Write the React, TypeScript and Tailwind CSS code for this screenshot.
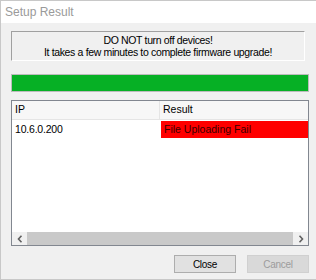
import React from 'react';

interface ResultRow {
  ip: string;
  result: string;
  failed: boolean;
}

const rows: ResultRow[] = [{ ip: '10.6.0.200', result: 'File Uploading Fail', failed: true }];

const Chevron = ({ dir }: { dir: 'left' | 'right' }) => (
  <svg width="6" height="8" viewBox="0 0 6 8" className="text-[#606060]">
    <path
      d={dir === 'left' ? 'M4.5 0.8 L1.5 4 L4.5 7.2' : 'M1.5 0.8 L4.5 4 L1.5 7.2'}
      fill="none"
      stroke="currentColor"
      strokeWidth="1.6"
    />
  </svg>
);

const App: React.FC = () => {
  return (
    <div
      className="w-[316px] h-[280px] flex flex-col bg-[#f0f0f0] border-t border-l border-b border-[#c8c8c8] text-[10px] text-black overflow-hidden"
      style={{ fontFamily: '"Liberation Sans", Arial, sans-serif' }}
    >
      {/* title bar */}
      <div className="h-[22px] shrink-0 bg-white flex items-center pl-[4px] text-[12px] text-[#9a9a9a]">
        Setup Result
      </div>

      <div className="flex-1 flex flex-col pl-[10px] pr-[7px] pt-[8px]">
        {/* warning message */}
        <div className="h-[30px] w-[294px] border-t border-l border-[#a0a0a0] border-b border-r border-b-white border-r-white flex flex-col items-center justify-center leading-[12px] tracking-[-0.35px] text-[10.5px]">
          <span>DO NOT turn off devices!</span>
          <span>It takes a few minutes to complete firmware upgrade!</span>
        </div>

        {/* progress bar */}
        <div className="mt-[13px] h-[18px] border border-[#bcbcbc] bg-[#e6e6e6]">
          <div className="h-full w-full bg-[#06b025]" />
        </div>

        {/* list view */}
        <div className="mt-[8px] h-[146px] border border-[#828790] bg-white flex flex-col text-[10.5px]">
          <div className="h-[19px] flex border-b border-[#e5e5e5] bg-[#f7f7f7]">
            <div className="w-[148px] pl-[3px] flex items-center border-r border-[#e5e5e5]">IP</div>
            <div className="flex-1 pl-[3px] flex items-center">Result</div>
          </div>
          <div className="flex-1">
            {rows.map(row => (
              <div key={row.ip} className="h-[17px] flex mt-[1px]">
                <div className="w-[149px] pl-[3px] flex items-center tracking-[-0.2px]">{row.ip}</div>
                <div
                  className={
                    row.failed
                      ? 'flex-1 pl-[3px] flex items-center bg-[#ff0000] text-[#3a0000]'
                      : 'flex-1 pl-[3px] flex items-center'
                  }
                >
                  {row.result}
                </div>
              </div>
            ))}
          </div>
          {/* horizontal scrollbar */}
          <div className="h-[13px] flex bg-[#c9c9c9]">
            <div className="w-[15px] bg-[#f0f0f0] flex items-center justify-center">
              <Chevron dir="left" />
            </div>
            <div className="flex-1" />
            <div className="w-[15px] bg-[#f0f0f0] flex items-center justify-center">
              <Chevron dir="right" />
            </div>
          </div>
        </div>

        {/* buttons */}
        <div className="mt-[9px] flex justify-end gap-[11px]">
          <button className="w-[62px] h-[18px] border border-[#adadad] bg-[#e1e1e1] text-[10px] tracking-[-0.3px] text-black flex items-center justify-center">
            Close
          </button>
          <button
            disabled
            className="w-[62px] h-[18px] border border-[#d0d0d0] bg-[#d9d9d9] text-[10px] tracking-[-0.3px] text-[#9c9c9c] flex items-center justify-center"
          >
            Cancel
          </button>
        </div>
      </div>
    </div>
  );
};

export default App;
